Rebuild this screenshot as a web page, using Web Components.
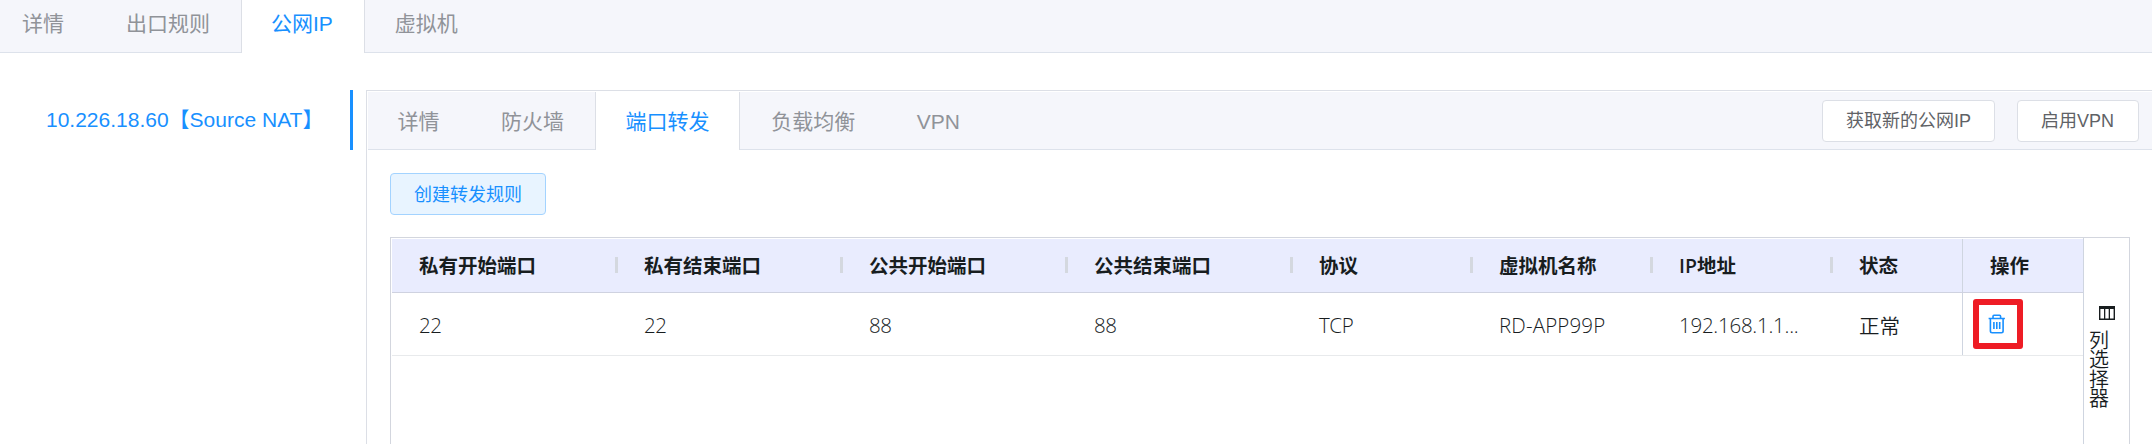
<!DOCTYPE html>
<html lang="zh-CN">
<head>
<meta charset="utf-8">
<title>公网IP</title>
<style>
html,body{margin:0;height:444px;overflow:hidden;background:#fff}
body{font-family:"Liberation Sans","Noto Sans CJK SC",sans-serif;font-size:21px;color:#181d1f}
</style>
</head>
<body>
<nat-page></nat-page>
<script>
const define = (name, html) => customElements.define(name, class extends HTMLElement {
  constructor() {
    super();
    const t = document.createElement('template');
    t.innerHTML = html;
    this.attachShadow({ mode: 'open' }).append(t.content.cloneNode(true));
  }
});

define('ui-tab', `<style>
:host{display:flex;align-items:center;box-sizing:border-box;padding:0 30px;border:solid transparent;border-width:0 1px;margin-bottom:-1px;color:#909399;font-size:21px;line-height:30px;white-space:nowrap}
:host([active]){background:#fff;color:#1890ff;border-color:#dcdfe6}
</style><slot></slot>`);

define('ui-tab-bar', `<style>
:host{display:flex;box-sizing:border-box;background:#f5f6fb;border-bottom:1px solid #dde2eb}
.end{margin-left:auto;display:flex;align-items:center;gap:22px}
</style><slot></slot><div class="end"><slot name="end"></slot></div>`);

define('ui-button', `<style>
:host{display:inline-flex;align-items:center;justify-content:center;box-sizing:border-box;height:42px;padding:0 23px;border:1px solid #dcdfe6;border-radius:4px;background:#fff;color:#606266;font-size:18px;line-height:18px;white-space:nowrap}
:host([plain]){background:#e8f4ff;border-color:#a3d3ff;color:#1890ff;padding:2px 23px 0}
</style><slot></slot>`);

define('ui-head', `<style>
:host{display:flex;align-items:center;box-sizing:border-box;padding-left:27px;font-size:19.5px;font-weight:600;line-height:28px;white-space:nowrap}
i{margin-left:auto;width:3px;height:16px;background:#d4d8df;margin-right:-1px;margin-top:-1px}
:host([last]) i{display:none}
</style><slot></slot><i></i>`);

define('ui-cell', `<style>
:host{display:flex;align-items:center;box-sizing:border-box;padding-left:27px;font-size:20.5px;font-weight:350;white-space:nowrap}
</style><slot></slot>`);

define('trash-icon', `<style>:host{display:block;width:18px;height:20px}svg{display:block}</style>
<svg width="18" height="20" viewBox="0 0 18 20" fill="none" stroke="#1890ff" stroke-width="1.6"><path d="M.6 4.5H16.9M5 4V2.4Q5 1.3 6 1.3H11.6Q12.6 1.3 12.6 2.4V4M2.4 4.5V17Q2.4 18.7 4.1 18.7H13.4Q15.1 18.7 15.1 17V4.5M5.9 8V15M8.8 8V15M11.7 8V15"/></svg>`);

define('columns-icon', `<style>:host{display:block;width:16px;height:14px}svg{display:block}</style>
<svg width="16" height="14" viewBox="0 0 16 14"><path d="M0 0H16V14H0ZM1.4 3V12.6H5V3ZM6.3 3V12.6H9.7V3ZM11 3V12.6H14.6V3Z" fill="#181d1f" fill-rule="evenodd"/></svg>`);

define('rule-grid', `<style>
:host{display:flex;box-sizing:border-box;width:1740px;height:260px;border:1px solid #d3d6de;border-bottom:0;color:#181d1f;font-family:"Open Sans","Noto Sans CJK SC",sans-serif}
.main{width:1692px;padding-top:1px;padding-left:1px;box-sizing:border-box}
.row{display:grid;grid-template-columns:225px 225px 225px 225px 180px 180px 180px 130px 1fr;height:63px;box-sizing:border-box;border-bottom:1px solid #e8eaec}
.head{height:54px;background:#e9ecfe;border-bottom-color:#cfd2e0}
.pin{border-left:1px solid #cfd5e0}
.row ui-cell{padding-top:2px}
.l{letter-spacing:-.4px}
.ip{letter-spacing:-.25px}
.n{letter-spacing:.15px}
.row .op{padding:0 0 0 10px}
.mark{box-sizing:border-box;width:50px;height:50px;border:6px solid #ee1c25;border-radius:3px;display:grid;place-items:center;padding:0 3px 0 0}
.side{flex:1;border-left:1px solid #cfd5e0;box-sizing:border-box;padding:68px 0 0 5px}
columns-icon{margin-left:10px}
.v{width:20px;margin-top:11px;font-size:20px;line-height:19.3px;word-break:break-all;font-weight:350}
</style>
<div class="main">
<div class="row head"><ui-head>私有开始端口</ui-head><ui-head>私有结束端口</ui-head><ui-head>公共开始端口</ui-head><ui-head>公共结束端口</ui-head><ui-head>协议</ui-head><ui-head>虚拟机名称</ui-head><ui-head>IP地址</ui-head><ui-head last>状态</ui-head><ui-head class="pin" last>操作</ui-head></div>
<div class="row"><ui-cell class="l">22</ui-cell><ui-cell class="l">22</ui-cell><ui-cell class="l">88</ui-cell><ui-cell class="l">88</ui-cell><ui-cell class="l">TCP</ui-cell><ui-cell class="n">RD-APP99P</ui-cell><ui-cell class="ip">192.168.1.1...</ui-cell><ui-cell>正常</ui-cell><ui-cell class="pin op"><div class="mark"><trash-icon></trash-icon></div></ui-cell></div>
</div>
<div class="side"><columns-icon></columns-icon><div class="v">列选择器</div></div>`);

define('nat-page', `<style>
:host{display:block;width:2152px;height:444px;overflow:hidden;background:#fff}
.top{height:53px}
.top ui-tab{padding:0 30px 6px}
.top ui-tab:first-of-type{padding-left:21px}
.top ui-tab[active]{padding-left:29px;padding-right:31px}
.top ui-tab:last-of-type{padding-left:29px}
.body{display:flex;margin-top:37px}
.side{flex:none;width:353px;height:60px;box-sizing:border-box;border-right:3px solid #1890ff;display:flex;align-items:center;padding:0 0 5px 46px;color:#1890ff;white-space:nowrap;font-size:21px}
.panel{flex:1;min-width:0;margin-left:13px;height:354px;border:solid #dcdfe6;border-width:1px 0 0 1px;box-sizing:border-box}
.inner{height:58px;margin:1px 0 0 1px;padding-right:13px}
.inner ui-tab{padding:2px 29.8px 0}
.inner ui-tab:first-of-type{padding-left:28.4px}
.vpn{padding:0 24px 0 23px}
.content{padding:23px 0 0 23px}
ui-button{vertical-align:top}
rule-grid{margin-top:22px}
</style>
<ui-tab-bar class="top"><ui-tab>详情</ui-tab><ui-tab>出口规则</ui-tab><ui-tab active>公网IP</ui-tab><ui-tab>虚拟机</ui-tab></ui-tab-bar>
<div class="body">
<div class="side"><span>10.226.18.60【Source NAT】</span></div>
<div class="panel">
<ui-tab-bar class="inner"><ui-tab>详情</ui-tab><ui-tab>防火墙</ui-tab><ui-tab active>端口转发</ui-tab><ui-tab>负载均衡</ui-tab><ui-tab>VPN</ui-tab><ui-button slot="end">获取新的公网IP</ui-button><ui-button class="vpn" slot="end">启用VPN</ui-button></ui-tab-bar>
<div class="content"><ui-button plain>创建转发规则</ui-button><rule-grid></rule-grid></div>
</div>
</div>`);
</script>
</body>
</html>
